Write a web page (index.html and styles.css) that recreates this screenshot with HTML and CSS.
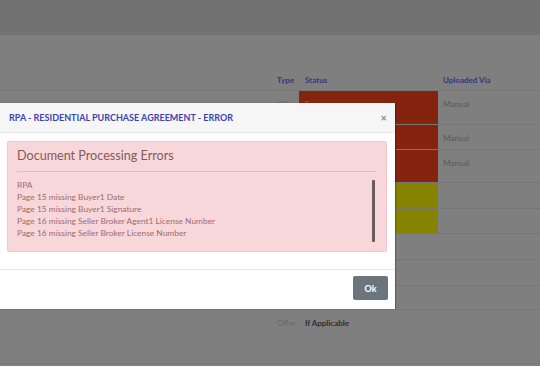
FILE: index.html
```html
<!DOCTYPE html>
<html lang="en">
  <head>
    <meta charset="UTF-8" />
    <meta name="viewport" content="width=device-width, initial-scale=1.0" />
    <title>Documents</title>
    <link rel="stylesheet" href="styles.css">
  </head>
  <body>
    <div class="page">
      <div class="topbar"></div>
      <div class="docs">
        <div class="row head">
          <div class="c-name"></div>
          <div class="c-type">Type</div>
          <div class="c-status">Status</div>
          <div class="c-via">Uploaded Via</div>
        </div>
        <div class="row r1">
          <div class="c-name"></div>
          <div class="c-type">Offer</div>
          <div class="c-status error">Error</div>
          <div class="c-via">Manual</div>
        </div>
        <div class="row r2">
          <div class="c-name"></div>
          <div class="c-type"></div>
          <div class="c-status error"></div>
          <div class="c-via">Manual</div>
        </div>
        <div class="row r3">
          <div class="c-name"></div>
          <div class="c-type"></div>
          <div class="c-status error"></div>
          <div class="c-via">Manual</div>
        </div>
        <div class="row r4">
          <div class="c-name"></div>
          <div class="c-type"></div>
          <div class="c-status warn"></div>
          <div class="c-via"></div>
        </div>
        <div class="row r5">
          <div class="c-name"></div>
          <div class="c-type"></div>
          <div class="c-status warn"></div>
          <div class="c-via"></div>
        </div>
        <div class="row r6"></div>
        <div class="row r7"></div>
        <div class="row r8"></div>
        <div class="row r9">
          <div class="c-name"></div>
          <div class="c-type">Offer</div>
          <div class="c-status strong">If Applicable</div>
          <div class="c-via"></div>
        </div>
      </div>
    </div>

    <div class="modal">
      <div class="modal-header">
        <div class="modal-title">RPA - Residential Purchase Agreement - Error</div>
        <div class="close">&times;</div>
      </div>
      <div class="modal-body">
        <div class="alert">
          <div class="alert-heading">Document Processing Errors</div>
          <div class="alert-line"></div>
          <div class="error-scroll">
            <div class="error-list">
              <div>RPA</div>
              <div>Page 15 missing Buyer1 Date</div>
              <div>Page 15 missing Buyer1 Signature</div>
              <div>Page 16 missing Seller Broker Agent1 License Number</div>
              <div>Page 16 missing Seller Broker License Number</div>
            </div>
            <div class="scrollbar"></div>
          </div>
        </div>
      </div>
      <div class="modal-footer">
        <button class="btn-ok">Ok</button>
      </div>
    </div>
  </body>
</html>
```

FILE: styles.css
```css
body {
  margin: 0;
  font-family: Lato, "Open Sans", sans-serif;
  background-color: #7f7f7f;
  overflow: hidden;
}
.page {
  height: 366px;
  background-color: #7f7f7f;
}
.topbar {
  height: 35px;
  background-color: #727272;
}
.docs {
  padding-top: 35px;
}
.row {
  display: flex;
  border-bottom: 1px solid #767676;
  font-size: 8px;
  color: #555;
}
.c-name {
  width: 270px;
}
.c-type {
  width: 29px;
  padding: 8px 0 0 7px;
  box-sizing: border-box;
  color: #666;
}
.c-status {
  width: 139px;
  padding: 8px 0 0 6px;
  box-sizing: border-box;
}
.c-via {
  flex: 1;
  padding: 8px 0 0 5px;
  color: #585858;
}
.head {
  height: 20px;
  font-weight: 700;
  color: #35357e;
}
.head .c-type,
.head .c-status,
.head .c-via {
  padding-top: 5px;
  color: #35357e;
}
.r1 { height: 33px; }
.r2 { height: 24px; }
.r3 { height: 32px; }
.r4 { height: 25px; }
.r5 { height: 24px; }
.r6 { height: 25px; }
.r7 { height: 25px; }
.r8 { height: 23px; }
.r9 { height: 53px; }
.error {
  background-color: #85240e;
  color: #a8634f;
}
.warn {
  background-color: #858300;
}
.strong {
  font-weight: 700;
  color: #2e2e2e;
}

.modal {
  position: absolute;
  top: 103px;
  left: 0;
  width: 395px;
  height: 206px;
  background-color: #fff;
  display: flex;
  flex-direction: column;
  box-shadow: 1px 0 1px rgba(0, 0, 0, 0.25);
}
.modal-header {
  height: 29px;
  background-color: #f6f6f6;
  border-bottom: 1px solid #e8e8e8;
  display: flex;
  align-items: center;
  justify-content: space-between;
  padding: 0 8px 0 9px;
}
.modal-title {
  font-size: 9px;
  font-weight: 700;
  text-transform: uppercase;
  color: #3c44b5;
}
.close {
  font-size: 11px;
  font-weight: 700;
  color: #8a8a8a;
}
.modal-body {
  padding: 8px 8px 17px 7px;
}
.alert {
  background-color: #f8d7da;
  border: 1px solid #f5c6cb;
  border-radius: 2px;
  padding: 5px 9px 11px 9px;
  height: 93px;
}
.alert-heading {
  font-size: 12.6px;
  color: #845a57;
  line-height: 18px;
}
.alert-line {
  height: 1px;
  background-color: #efb6bc;
  margin: 6px 0 7px 0;
}
.error-scroll {
  display: flex;
  justify-content: space-between;
}
.error-list {
  font-size: 8.4px;
  line-height: 12px;
  color: #9e6c6f;
}
.scrollbar {
  width: 3px;
  height: 62px;
  margin: 1px 2px 0 0;
  background-color: #6b5b5d;
  border-radius: 1px;
}
.modal-footer {
  border-top: 1px solid #e8e8e8;
  display: flex;
  justify-content: flex-end;
  padding: 6px 7px 0 0;
}
.btn-ok {
  width: 35px;
  height: 24px;
  border: none;
  border-radius: 2px;
  background-color: #6c757d;
  color: #fff;
  font-family: Lato, sans-serif;
  font-weight: 700;
  font-size: 9px;
}
```
